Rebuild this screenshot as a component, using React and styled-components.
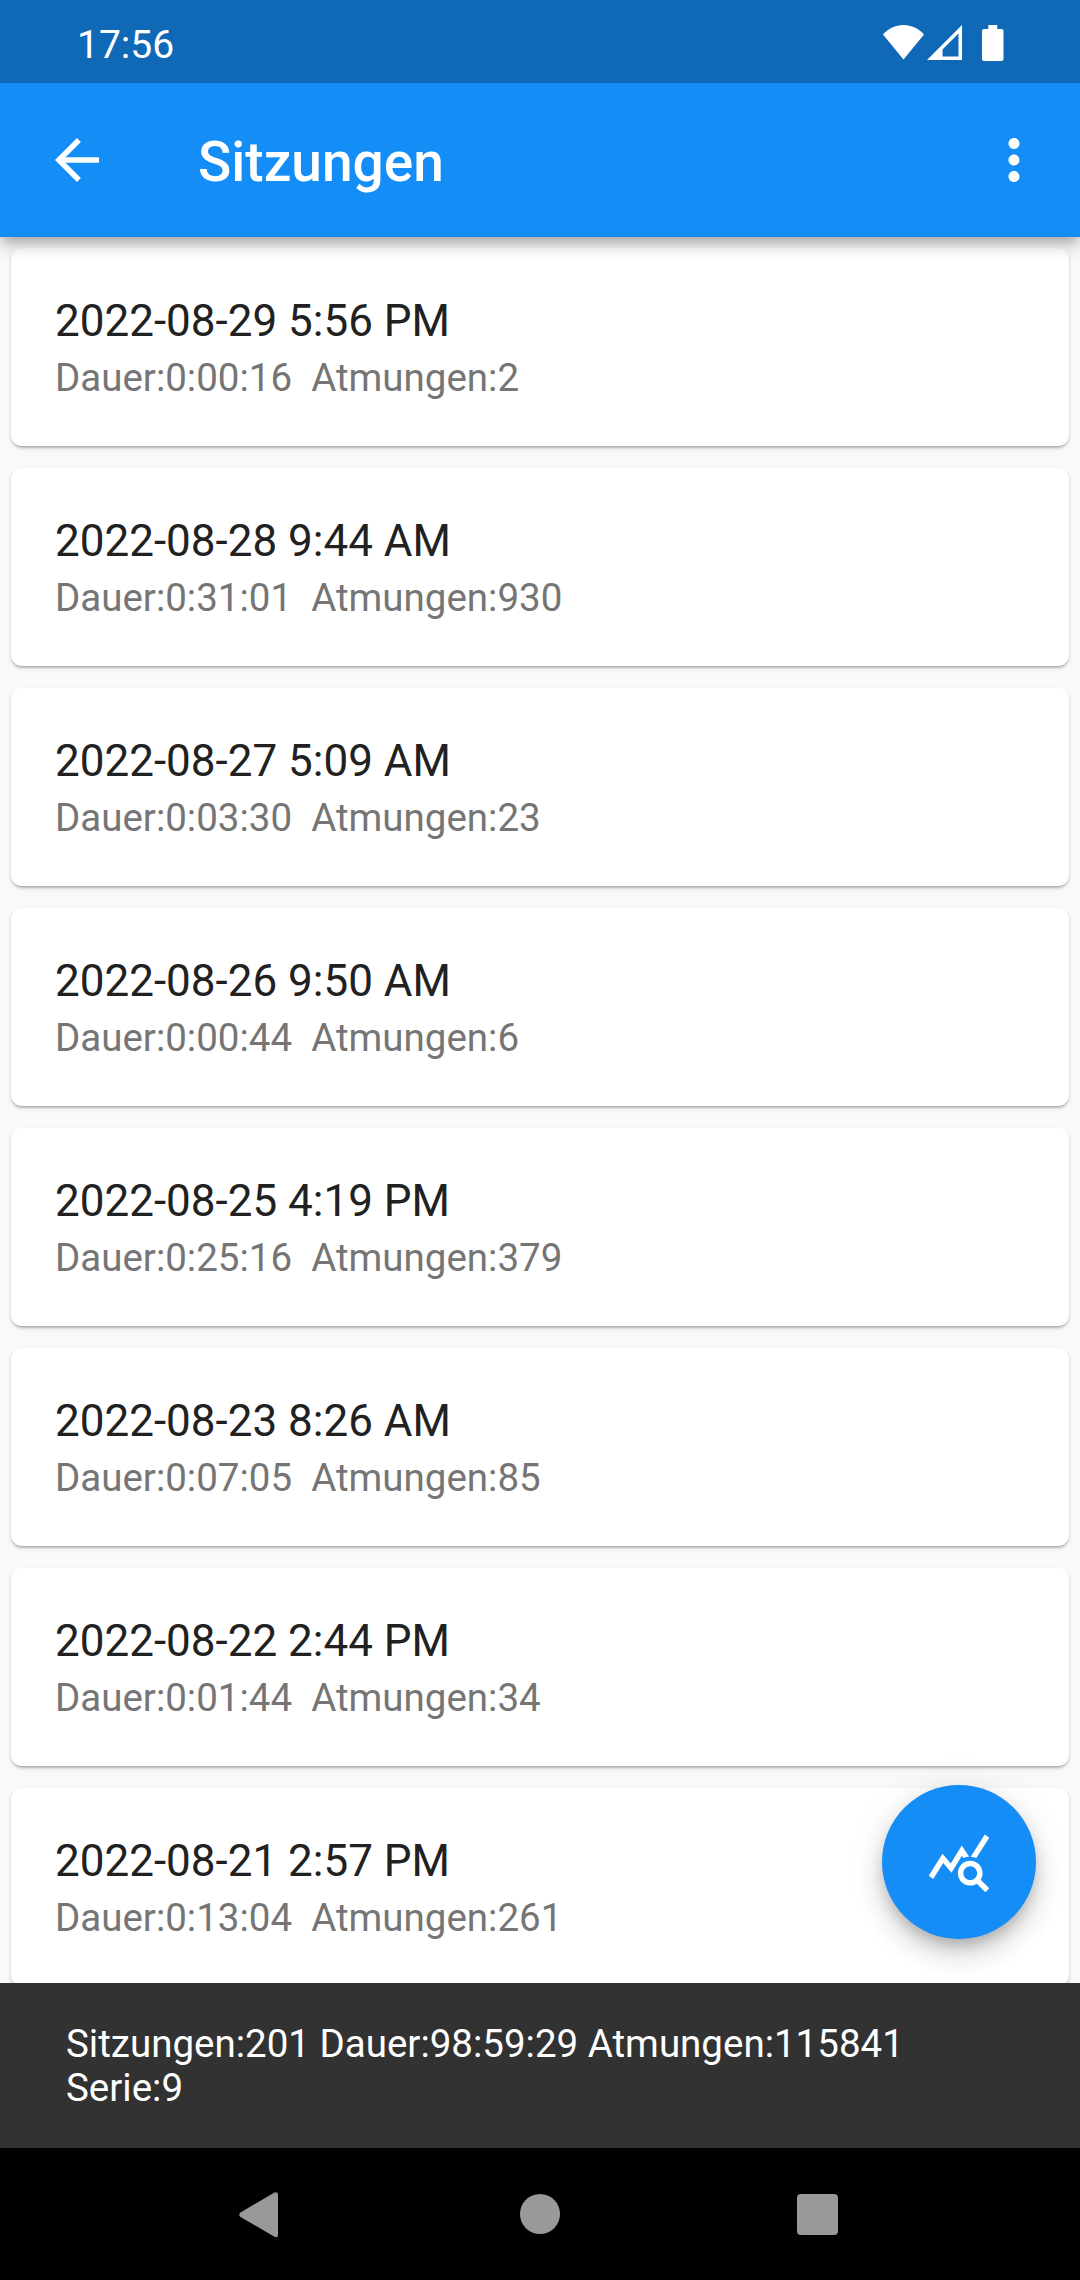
import React from "react";
import styled, { createGlobalStyle } from "styled-components";

const GlobalStyle = createGlobalStyle`
  *, *::before, *::after { box-sizing: border-box; }
  html, body { margin: 0; padding: 0; }
  body { font-family: Roboto, "Noto Sans", sans-serif; background: #000; }
`;

const Screen = styled.div`
  position: relative;
  display: flex;
  flex-direction: column;
  width: 1080px;
  height: 2280px;
  overflow: hidden;
  background: #f9f9f9;
`;

const StatusBar = styled.div`
  flex: none;
  z-index: 2;
  display: flex;
  justify-content: space-between;
  height: 83px;
  padding: 0 76px 0 77px;
  background: #1069b7;
  color: #fff;
`;

const Clock = styled.span`
  padding-top: 22px;
  font-size: 39px;
  line-height: 46px;
`;

const StatusIcons = styled.div`
  display: flex;
  padding-top: 25px;
`;

const StatusIcon = styled.svg`
  display: block;
  margin-left: ${(p) => p.$gap || 0}px;
`;

const AppBar = styled.header`
  flex: none;
  z-index: 1;
  display: flex;
  align-items: center;
  height: 154px;
  padding: 0 33px 0 44px;
  background: #148df7;
  color: #fff;
  box-shadow: 0 6px 11px -3px rgba(0, 0, 0, 0.2), 0 11px 14px 0 rgba(0, 0, 0, 0.14), 0 3px 22px 0 rgba(0, 0, 0, 0.06);
`;

const IconButton = styled.button`
  display: flex;
  padding: 0;
  border: 0;
  background: none;
  color: inherit;
`;

const Icon = styled.svg`
  display: block;
  width: 66px;
  height: 66px;
  fill: currentColor;
`;

const Title = styled.h1`
  flex: 1;
  margin: 0 0 0 88px;
  padding-top: 3px;
  font-size: 55px;
  font-weight: 500;
  line-height: 64px;
`;

const SessionList = styled.main`
  flex: 1;
  min-height: 0;
  overflow: hidden;
  display: flex;
  flex-direction: column;
  gap: 22px;
  padding: 11px;
`;

const Card = styled.article`
  flex: none;
  height: 198px;
  padding: 46px 44px 0;
  border-radius: 11px;
  background: #fff;
  box-shadow: 0 4px 3px -3px rgba(0, 0, 0, 0.2), 0 2px 3px 0 rgba(0, 0, 0, 0.14), 0 2px 5px 0 rgba(0, 0, 0, 0.08);
`;

const SessionDate = styled.div`
  font-size: 44px;
  line-height: 54px;
  color: #212121;
`;

const SessionStats = styled.div`
  margin-top: 5px;
  font-size: 38.5px;
  line-height: 50px;
  white-space: pre;
  color: #757575;
`;

const Fab = styled.button`
  position: absolute;
  right: 44px;
  bottom: 341px;
  z-index: 1;
  display: flex;
  align-items: center;
  justify-content: center;
  width: 154px;
  height: 154px;
  padding: 0;
  border: 0;
  border-radius: 50%;
  background: #148df7;
  color: #fff;
  box-shadow: 0 8px 14px -3px rgba(0, 0, 0, 0.2), 0 16px 27px 0 rgba(0, 0, 0, 0.14), 0 3px 40px 0 rgba(0, 0, 0, 0.08);
`;

const Summary = styled.footer`
  flex: none;
  z-index: 2;
  height: 165px;
  padding: 39px 66px 0;
  background: #323232;
  color: #fff;
  font-size: 38.5px;
  line-height: 44px;
`;

const NavBar = styled.nav`
  flex: none;
  z-index: 2;
  display: flex;
  align-items: center;
  justify-content: center;
  gap: 212px;
  height: 132px;
  background: #000;
`;

const NavIcon = styled.svg`
  display: block;
  width: 66px;
  height: 66px;
  fill: #999;
`;

const sessions = [
  { date: "2022-08-29 5:56 PM", duration: "0:00:16", breaths: 2 },
  { date: "2022-08-28 9:44 AM", duration: "0:31:01", breaths: 930 },
  { date: "2022-08-27 5:09 AM", duration: "0:03:30", breaths: 23 },
  { date: "2022-08-26 9:50 AM", duration: "0:00:44", breaths: 6 },
  { date: "2022-08-25 4:19 PM", duration: "0:25:16", breaths: 379 },
  { date: "2022-08-23 8:26 AM", duration: "0:07:05", breaths: 85 },
  { date: "2022-08-22 2:44 PM", duration: "0:01:44", breaths: 34 },
  { date: "2022-08-21 2:57 PM", duration: "0:13:04", breaths: 261 },
];

export default function App() {
  return (
    <>
      <GlobalStyle />
      <Screen>
        <StatusBar>
          <Clock>17:56</Clock>
          <StatusIcons>
            <StatusIcon width="41" height="35" viewBox="0 0 41 35" fill="#fff">
              <path d="M0 9.5C5.500 3.500 12.500 0 20.500 0S35.500 3.500 41 9.500L20.500 34.500Z" />
            </StatusIcon>
            <StatusIcon $gap={3} width="35" height="35" viewBox="0 0 35 35" fill="#fff">
              <path fillRule="evenodd" d="M35 0V35H0ZM31.500 8.500L15.500 24.500V31.500H31.500Z" />
            </StatusIcon>
            <StatusIcon $gap={20} width="22" height="36" viewBox="0 0 22 36" fill="#fff">
              <path d="M6.300 0H15.200V4H19.500Q21.500 4 21.500 6V34Q21.500 36 19.500 36H2Q0 36 0 34V6Q0 4 2 4H6.300Z" />
            </StatusIcon>
          </StatusIcons>
        </StatusBar>
        <AppBar>
          <IconButton aria-label="Zurück">
            <Icon viewBox="0 0 24 24">
              <path d="M20 11H7.830l5.590-5.590L12 4l-8 8 8 8 1.410-1.410L7.830 13H20v-2z" />
            </Icon>
          </IconButton>
          <Title>Sitzungen</Title>
          <IconButton aria-label="Mehr">
            <Icon viewBox="0 0 24 24">
              <path d="M12 8c1.100 0 2-.9 2-2s-.9-2-2-2-2 .9-2 2 .9 2 2 2zm0 2c-1.100 0-2 .9-2 2s.9 2 2 2 2-.9 2-2-.9-2-2-2zm0 6c-1.100 0-2 .9-2 2s.9 2 2 2 2-.9 2-2-.9-2-2-2z" />
            </Icon>
          </IconButton>
        </AppBar>
        <SessionList>
          {sessions.map((s) => (
            <Card key={s.date}>
              <SessionDate>{s.date}</SessionDate>
              <SessionStats>{`Dauer:${s.duration}  Atmungen:${s.breaths}`}</SessionStats>
            </Card>
          ))}
        </SessionList>
        <Fab aria-label="Statistik">
          <Icon viewBox="0 0 24 24">
            <path d="M19.88 18.47c.44-.7.7-1.510.7-2.390 0-2.490-2.010-4.500-4.500-4.500s-4.500 2.010-4.500 4.500 2.010 4.500 4.490 4.500c.88 0 1.700-.26 2.390-.7L21.580 23 23 21.580l-3.120-3.110zm-3.800.11c-1.380 0-2.500-1.120-2.500-2.500s1.120-2.500 2.500-2.500 2.500 1.120 2.500 2.500-1.120 2.500-2.500 2.500zm-.36-8.500c-.74.020-1.450.18-2.100.45l-.55-.83-3.800 6.180-3.010-3.520-3.630 5.810L1 17l5-8 3 3.500L13 6l2.720 4.080zm2.590.5c-.64-.28-1.330-.45-2.050-.49L21.380 2 23 3.180l-4.690 7.400z" />
          </Icon>
        </Fab>
        <Summary>Sitzungen:201 Dauer:98:59:29 Atmungen:115841 Serie:9</Summary>
        <NavBar>
          <NavIcon viewBox="0 0 66 66">
            <path d="M11.500 31.400L45.500 11.600Q49 10.200 49 13.700V53.700Q49 57.200 45.500 55.800L11.500 36Q9 33.700 11.500 31.400Z" />
          </NavIcon>
          <NavIcon viewBox="0 0 66 66">
            <circle cx="33" cy="33" r="20" />
          </NavIcon>
          <NavIcon viewBox="0 0 66 66">
            <rect x="12" y="13" width="41" height="41" rx="4" />
          </NavIcon>
        </NavBar>
      </Screen>
    </>
  );
}
